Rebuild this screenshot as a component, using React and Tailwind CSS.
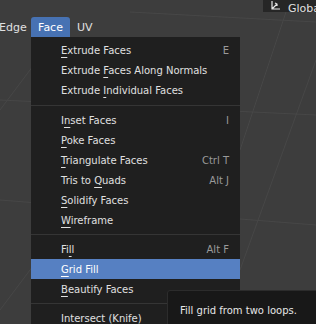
const U = ({ children }) => (
  <span className="underline decoration-1 underline-offset-[3px]">{children}</span>
)

const Item = ({ label, shortcut, active }) => (
  <div
    className={`h-[20px] shrink-0 flex items-center justify-between pl-[30px] pr-[11px] pt-[2px] ${
      active ? 'bg-[#5680c2] text-white' : 'text-[#e0e0e0]'
    }`}
  >
    <span>{label}</span>
    {shortcut && <span className="text-[#9a9a9a]">{shortcut}</span>}
  </div>
)

const Sep = ({ h }) => (
  <div className={`${h} shrink-0 flex items-center`}>
    <div className="w-full h-px bg-[#353535]" />
  </div>
)

export default function App() {
  return (
    <div
      className="w-[316px] h-[324px] relative overflow-hidden bg-[#3d3d3d] flex flex-col text-[10px] leading-none"
      style={{ fontFamily: '"DejaVu Sans", sans-serif' }}
    >
      {/* viewport grid */}
      <svg className="absolute inset-0" width="316" height="324">
        <g stroke="#474747" strokeWidth="1" fill="none">
          <line x1="0" y1="100" x2="316" y2="115" />
          <line x1="0" y1="200" x2="316" y2="225" />
          <line x1="130" y1="12" x2="316" y2="22" />
          <line x1="290" y1="0" x2="240" y2="150" />
          <line x1="316" y1="60" x2="240" y2="270" />
          <line x1="60" y1="30" x2="0" y2="110" />
          <line x1="60" y1="230" x2="0" y2="310" />
        </g>
      </svg>

      <div className="relative h-[17px] shrink-0 flex justify-end items-start">
        <div className="h-[12px] w-[53px] bg-[#262626] flex items-end gap-[6px] pl-[7px] text-[#e0e0e0] text-[11px] overflow-hidden">
          <svg width="12" height="11" viewBox="0 0 12 11" className="mb-[1px] shrink-0">
            <path d="M2 1 L2 9 L10 9 M2 9 L7 4 M5 3 L7 4 L7 6" stroke="#e8e8e8" strokeWidth="1.2" fill="none" />
          </svg>
          <span className="mb-[-2px]">Global</span>
        </div>
      </div>

      <div className="relative h-[20px] shrink-0 flex items-center text-[#e0e0e0] text-[11px]">
        <span className="-ml-[1px] w-[32px]">Edge</span>
        <span className="h-[20px] w-[39px] bg-[#4772b3] rounded-t-[3px] flex items-center justify-center text-white">
          Face
        </span>
        <span className="ml-[7px]">UV</span>
      </div>

      <div className="relative ml-[31px] w-[209px] flex-1 min-h-0 overflow-hidden bg-[#1f1f1f] pt-[3px] flex flex-col">
        <Item label={<><U>E</U>xtrude Faces</>} shortcut="E" />
        <Item label={<>Extrude <U>F</U>aces Along Normals</>} />
        <Item label={<>Extrude <U>I</U>ndividual Faces</>} />
        <Sep h="h-[10px]" />
        <Item label={<>I<U>n</U>set Faces</>} shortcut="I" />
        <Item label={<><U>P</U>oke Faces</>} />
        <Item label={<><U>T</U>riangulate Faces</>} shortcut="Ctrl T" />
        <Item label={<>Tris to <U>Q</U>uads</>} shortcut="Alt J" />
        <Item label={<><U>S</U>olidify Faces</>} />
        <Item label={<><U>W</U>ireframe</>} />
        <Sep h="h-[9px]" />
        <Item label={<>Fi<U>l</U>l</>} shortcut="Alt F" />
        <Item label={<><U>G</U>rid Fill</>} active />
        <Item label={<><U>B</U>eautify Faces</>} />
        <Sep h="h-[9px]" />
        <Item label="Intersect (Knife)" />
      </div>

      <div className="absolute left-[167px] top-[290px] w-[160px] h-[40px] bg-[#181818] border border-[#2c2c2c] rounded-[3px] pl-[12px] pt-[15px] text-[#e6e6e6]">
        Fill grid from two loops.
      </div>
    </div>
  )
}
